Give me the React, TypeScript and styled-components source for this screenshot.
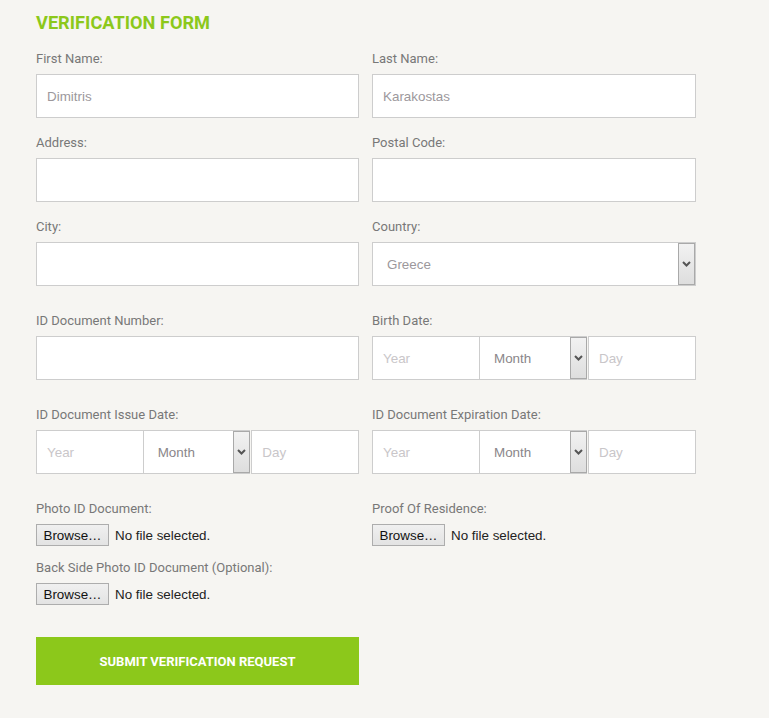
import React from "react";
import styled, { createGlobalStyle } from "styled-components";

const GlobalStyle = createGlobalStyle`
  html, body { margin: 0; padding: 0; background: #f6f5f2; }
  body { font-family: Roboto, "Liberation Sans", Arial, sans-serif; }
  * { box-sizing: border-box; }
`;

const Page = styled.div`
  width: 769px;
  min-height: 718px;
  padding: 12px 0 0 36px;
  background: #f6f5f2;
`;

const Title = styled.h2`
  margin: 0 0 16px 0;
  font-family: Roboto, "Liberation Sans", sans-serif;
  font-weight: 700;
  font-size: 18.2px;
  line-height: 22px;
  color: #8cc81b;
`;

const Grid = styled.div`
  display: grid;
  grid-template-columns: 323px 324px;
  column-gap: 13px;
  width: 660px;
`;

const Field = styled.div<{ $gap: number }>`
  display: flex;
  flex-direction: column;
  margin-bottom: ${(p) => p.$gap}px;
`;

const Label = styled.label`
  display: block;
  font-family: Roboto, "Liberation Sans", sans-serif;
  font-size: 13px;
  line-height: 16px;
  padding-top: 1px;
  color: #787878;
  margin-bottom: 7px;
`;

const TextInput = styled.div`
  height: 44px;
  border: 1px solid #cdcdcd;
  background: #fff;
  display: flex;
  align-items: center;
  padding-left: 10px;
  font-family: "Liberation Sans", Arial, sans-serif;
  font-size: 13.4px;
  color: #9c989c;
`;

const SelectBox = styled.div<{ $color: string }>`
  height: 44px;
  border: 1px solid #cdcdcd;
  background: #fff;
  display: flex;
  align-items: stretch;
  font-family: "Liberation Sans", Arial, sans-serif;
  font-size: 13.4px;
  color: ${(p) => p.$color};
  min-width: 0;
`;

const SelectText = styled.span<{ $indent: number }>`
  flex: 1;
  display: flex;
  align-items: center;
  padding-left: ${(p) => p.$indent}px;
`;

const ArrowButton = styled.span`
  width: 17px;
  border: 1px solid #a9a9a9;
  background: linear-gradient(#f2f2f2, #dedede);
  display: flex;
  align-items: center;
  justify-content: center;
`;

const DateRow = styled.div`
  display: grid;
  grid-template-columns: minmax(0, 1fr) minmax(0, 1fr) minmax(0, 1fr);
  height: 44px;
`;

const DateCell = styled.div`
  min-width: 0;
  border: 1px solid #cdcdcd;
  background: #fff;
  display: flex;
  align-items: center;
  padding-left: 10px;
  font-family: "Liberation Sans", Arial, sans-serif;
  font-size: 13.4px;
  color: #c9c6c9;
  & + & { border-left-width: 2px; border-left-color: #d8d8d8; }
`;

const DateSelect = styled(SelectBox)`
  border-left-width: 0;
  border-right-width: 0;
  margin-right: 1px;
`;

const FileRow = styled.div`
  display: flex;
  align-items: center;
  gap: 6px;
  height: 22px;
`;

const BrowseButton = styled.span`
  width: 73px;
  height: 22px;
  border: 1px solid #adadad;
  background: linear-gradient(#f0f0f0, #e3e3e3);
  display: flex;
  align-items: center;
  justify-content: center;
  font-family: "Liberation Sans", Arial, sans-serif;
  font-size: 13.4px;
  color: #111;
`;

const FileStatus = styled.span`
  font-family: "Liberation Sans", Arial, sans-serif;
  font-size: 13.4px;
  color: #222;
`;

const SubmitButton = styled.button`
  width: 323px;
  height: 48px;
  border: none;
  background: #8cc81b;
  color: #fff;
  font-family: Roboto, "Liberation Sans", sans-serif;
  font-weight: 700;
  font-size: 13px;
  padding-top: 1px;
  cursor: pointer;
`;

const Column = styled.div`
  display: flex;
  flex-direction: column;
`;

const Chevron = () => (
  <svg width="9" height="6" viewBox="0 0 9 6">
    <path d="M1 1 L4.5 4.5 L8 1" stroke="#555" strokeWidth="2" fill="none" />
  </svg>
);

const DateInput = () => (
  <DateRow>
    <DateCell>Year</DateCell>
    <DateSelect $color="#8a868a">
      <SelectText $indent={14}>Month</SelectText>
      <ArrowButton>
        <Chevron />
      </ArrowButton>
    </DateSelect>
    <DateCell>Day</DateCell>
  </DateRow>
);

const FileInput = () => (
  <FileRow>
    <BrowseButton>Browse…</BrowseButton>
    <FileStatus>No file selected.</FileStatus>
  </FileRow>
);

export default function App() {
  return (
    <Page>
      <GlobalStyle />
      <Title>VERIFICATION FORM</Title>
      <Grid>
        <Field $gap={16}>
          <Label>First Name:</Label>
          <TextInput>Dimitris</TextInput>
        </Field>
        <Field $gap={16}>
          <Label>Last Name:</Label>
          <TextInput>Karakostas</TextInput>
        </Field>
        <Field $gap={16}>
          <Label>Address:</Label>
          <TextInput />
        </Field>
        <Field $gap={16}>
          <Label>Postal Code:</Label>
          <TextInput />
        </Field>
        <Field $gap={26}>
          <Label>City:</Label>
          <TextInput />
        </Field>
        <Field $gap={26}>
          <Label>Country:</Label>
          <SelectBox $color="#9c989c">
            <SelectText $indent={14}>Greece</SelectText>
            <ArrowButton>
              <Chevron />
            </ArrowButton>
          </SelectBox>
        </Field>
        <Field $gap={26}>
          <Label>ID Document Number:</Label>
          <TextInput />
        </Field>
        <Field $gap={26}>
          <Label>Birth Date:</Label>
          <DateInput />
        </Field>
        <Field $gap={26}>
          <Label>ID Document Issue Date:</Label>
          <DateInput />
        </Field>
        <Field $gap={26}>
          <Label>ID Document Expiration Date:</Label>
          <DateInput />
        </Field>
        <Column>
          <Field $gap={13}>
            <Label>Photo ID Document:</Label>
            <FileInput />
          </Field>
          <Field $gap={32}>
            <Label>Back Side Photo ID Document (Optional):</Label>
            <FileInput />
          </Field>
        </Column>
        <Column>
          <Field $gap={13}>
            <Label>Proof Of Residence:</Label>
            <FileInput />
          </Field>
        </Column>
      </Grid>
      <SubmitButton>SUBMIT VERIFICATION REQUEST</SubmitButton>
    </Page>
  );
}
